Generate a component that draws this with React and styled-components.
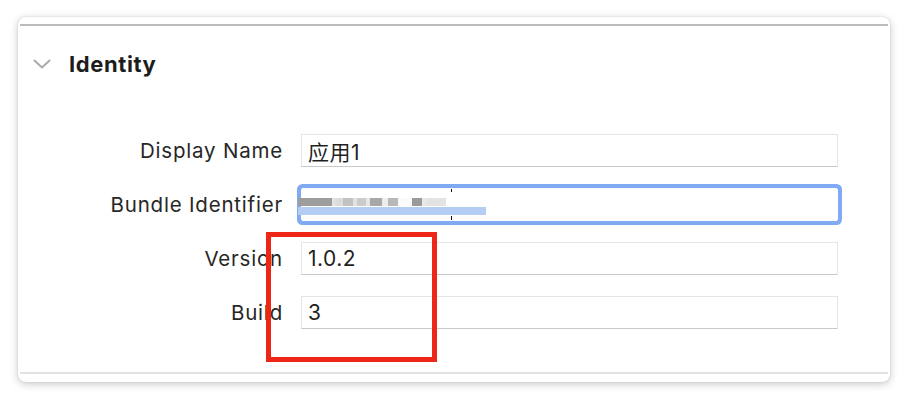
import React from 'react';
import styled, { createGlobalStyle } from 'styled-components';

const GlobalStyle = createGlobalStyle`
  body {
    margin: 0;
    background: #ffffff;
    font-family: Inter, "Noto Sans CJK SC", "Liberation Sans", sans-serif;
    color: #262626;
  }
`;

const Page = styled.div`
  width: 908px;
  height: 400px;
  box-sizing: border-box;
  padding: 17px 18px 18px 18px;
`;

const Card = styled.div`
  height: 365px;
  box-sizing: border-box;
  padding: 7px 2px 8px 2px;
  background: #ffffff;
  border-radius: 8px;
  box-shadow: 0 2px 9px rgba(0, 0, 0, 0.22), 0 0 2px rgba(0, 0, 0, 0.12);
`;

const Section = styled.div`
  position: relative;
  height: 100%;
  box-sizing: border-box;
  border-top: 2px solid #bcbcbc;
  border-bottom: 2px solid #e2e2e2;
`;

const Header = styled.div`
  display: flex;
  align-items: center;
  height: 76px;
  padding-left: 13px;
  gap: 18px;
`;

const Title = styled.h2`
  margin: 0;
  font-size: 22px;
  font-weight: 700;
  color: #1d1d1d;
  letter-spacing: 0.6px;
`;

const Form = styled.div`
  display: grid;
  grid-template-columns: 263px 537px;
  column-gap: 18px;
  row-gap: 21px;
  padding-top: 32px;
`;

const Label = styled.div`
  height: 33px;
  display: flex;
  align-items: center;
  justify-content: flex-end;
  font-size: 20.5px;
  letter-spacing: 0.8px;
  color: #272727;
`;

const Field = styled.div`
  position: relative;
  height: 33px;
  box-sizing: border-box;
  display: flex;
  align-items: center;
  padding-left: 6px;
  background: #ffffff;
  border: 1px solid #e6e6e6;
  border-bottom-color: #c9c9c9;
  font-size: 21px;
  letter-spacing: 0.5px;
  color: #1f1f1f;
  ${({ focused }) => focused && `
    border-color: #ffffff;
    border-radius: 2px;
    box-shadow: 0 0 0 4px #80aaf2;
  `}
`;

const Redacted = styled.div`
  display: flex;
  flex-direction: column;
  gap: 1px;
  margin-left: -10px;
  margin-top: 3px;
`;

const Blocks = styled.div`
  display: flex;
  height: 8px;
`;

const Block = styled.span`
  width: ${({ w }) => w}px;
  background: ${({ c }) => c};
`;

const Selection = styled.div`
  width: 188px;
  height: 8px;
  background: #b5cdf4;
`;

const Caret = styled.span`
  position: absolute;
  left: 149px;
  top: 0;
  bottom: 0;
  width: 1px;
  border-top: 3px solid #111;
  border-bottom: 4px solid #111;
`;

const Annotation = styled.div`
  position: absolute;
  left: 246px;
  top: 206px;
  width: 171px;
  height: 130px;
  box-sizing: border-box;
  border: 5px solid #ee2618;
`;

const Chevron = () => (
  <svg width="18" height="10" viewBox="0 0 18 10">
    <path d="M1.5 1.5 L9 8.5 L16.5 1.5" fill="none" stroke="#ababab" strokeWidth="2" strokeLinecap="round" strokeLinejoin="round" />
  </svg>
);

const blocks = [
  [34, '#9d9d9d'], [3, '#e4e4e4'], [8, '#dcdcdc'], [10, '#c2c2c2'], [4, '#e2e2e2'],
  [9, '#cbcbcb'], [4, '#e6e6e6'], [12, '#a8a8a8'], [6, '#ececec'], [10, '#b8b8b8'],
  [14, '#fafafa'], [10, '#9a9a9a'], [4, '#e8e8e8'], [20, '#e3e3e3']
];

export default function App() {
  return (
    <Page>
      <GlobalStyle />
      <Card>
        <Section>
          <Header>
            <Chevron />
            <Title>Identity</Title>
          </Header>
          <Form>
            <Label>Display Name</Label>
            <Field>应用1</Field>
            <Label>Bundle Identifier</Label>
            <Field focused>
              <Redacted>
                <Blocks>
                  {blocks.map(([w, c], i) => <Block key={i} w={w} c={c} />)}
                </Blocks>
                <Selection />
              </Redacted>
              <Caret />
            </Field>
            <Label>Version</Label>
            <Field>1.0.2</Field>
            <Label>Build</Label>
            <Field>3</Field>
          </Form>
          <Annotation />
        </Section>
      </Card>
    </Page>
  );
}
